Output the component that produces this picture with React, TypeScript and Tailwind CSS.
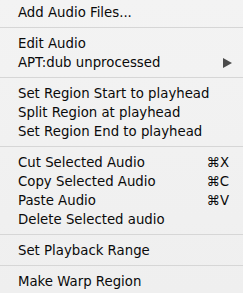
import { Fragment } from "react";

type Item = { label: string; shortcut?: string; submenu?: boolean };

const groups: Item[][] = [
  [{ label: "Add Audio Files..." }],
  [{ label: "Edit Audio" }, { label: "APT:dub unprocessed", submenu: true }],
  [
    { label: "Set Region Start to playhead" },
    { label: "Split Region at playhead" },
    { label: "Set Region End to playhead" },
  ],
  [
    { label: "Cut Selected Audio", shortcut: "⌘X" },
    { label: "Copy Selected Audio", shortcut: "⌘C" },
    { label: "Paste Audio", shortcut: "⌘V" },
    { label: "Delete Selected audio" },
  ],
  [{ label: "Set Playback Range" }],
  [{ label: "Make Warp Region" }],
];

function MenuRow({ item }: { item: Item }) {
  return (
    <div className="flex h-[19px] items-center justify-between pl-[18px] pr-[14px] leading-[19px]">
      <span>{item.label}</span>
      {item.shortcut && <span>{item.shortcut}</span>}
      {item.submenu && (
        <svg width="9" height="10" viewBox="0 0 9 10" className="mr-[-3px]">
          <path d="M0 0 L9 5 L0 10 Z" fill="#4b4b4b" />
        </svg>
      )}
    </div>
  );
}

export default function App() {
  return (
    <div
      className="h-[293px] w-[243px] overflow-hidden bg-gradient-to-b from-[#f3f3f3] to-[#efefef] pt-[3px] text-[13.3px] text-[#0a0a0a]"
      style={{ fontFamily: '"Lucida Grande", "DejaVu Sans", sans-serif' }}
    >
      {groups.map((group, i) => (
        <Fragment key={i}>
          {i > 0 && <div className="mt-[5px] mb-[6px] h-px bg-[#d6d6d6]" />}
          {group.map((item) => (
            <MenuRow key={item.label} item={item} />
          ))}
        </Fragment>
      ))}
    </div>
  );
}
